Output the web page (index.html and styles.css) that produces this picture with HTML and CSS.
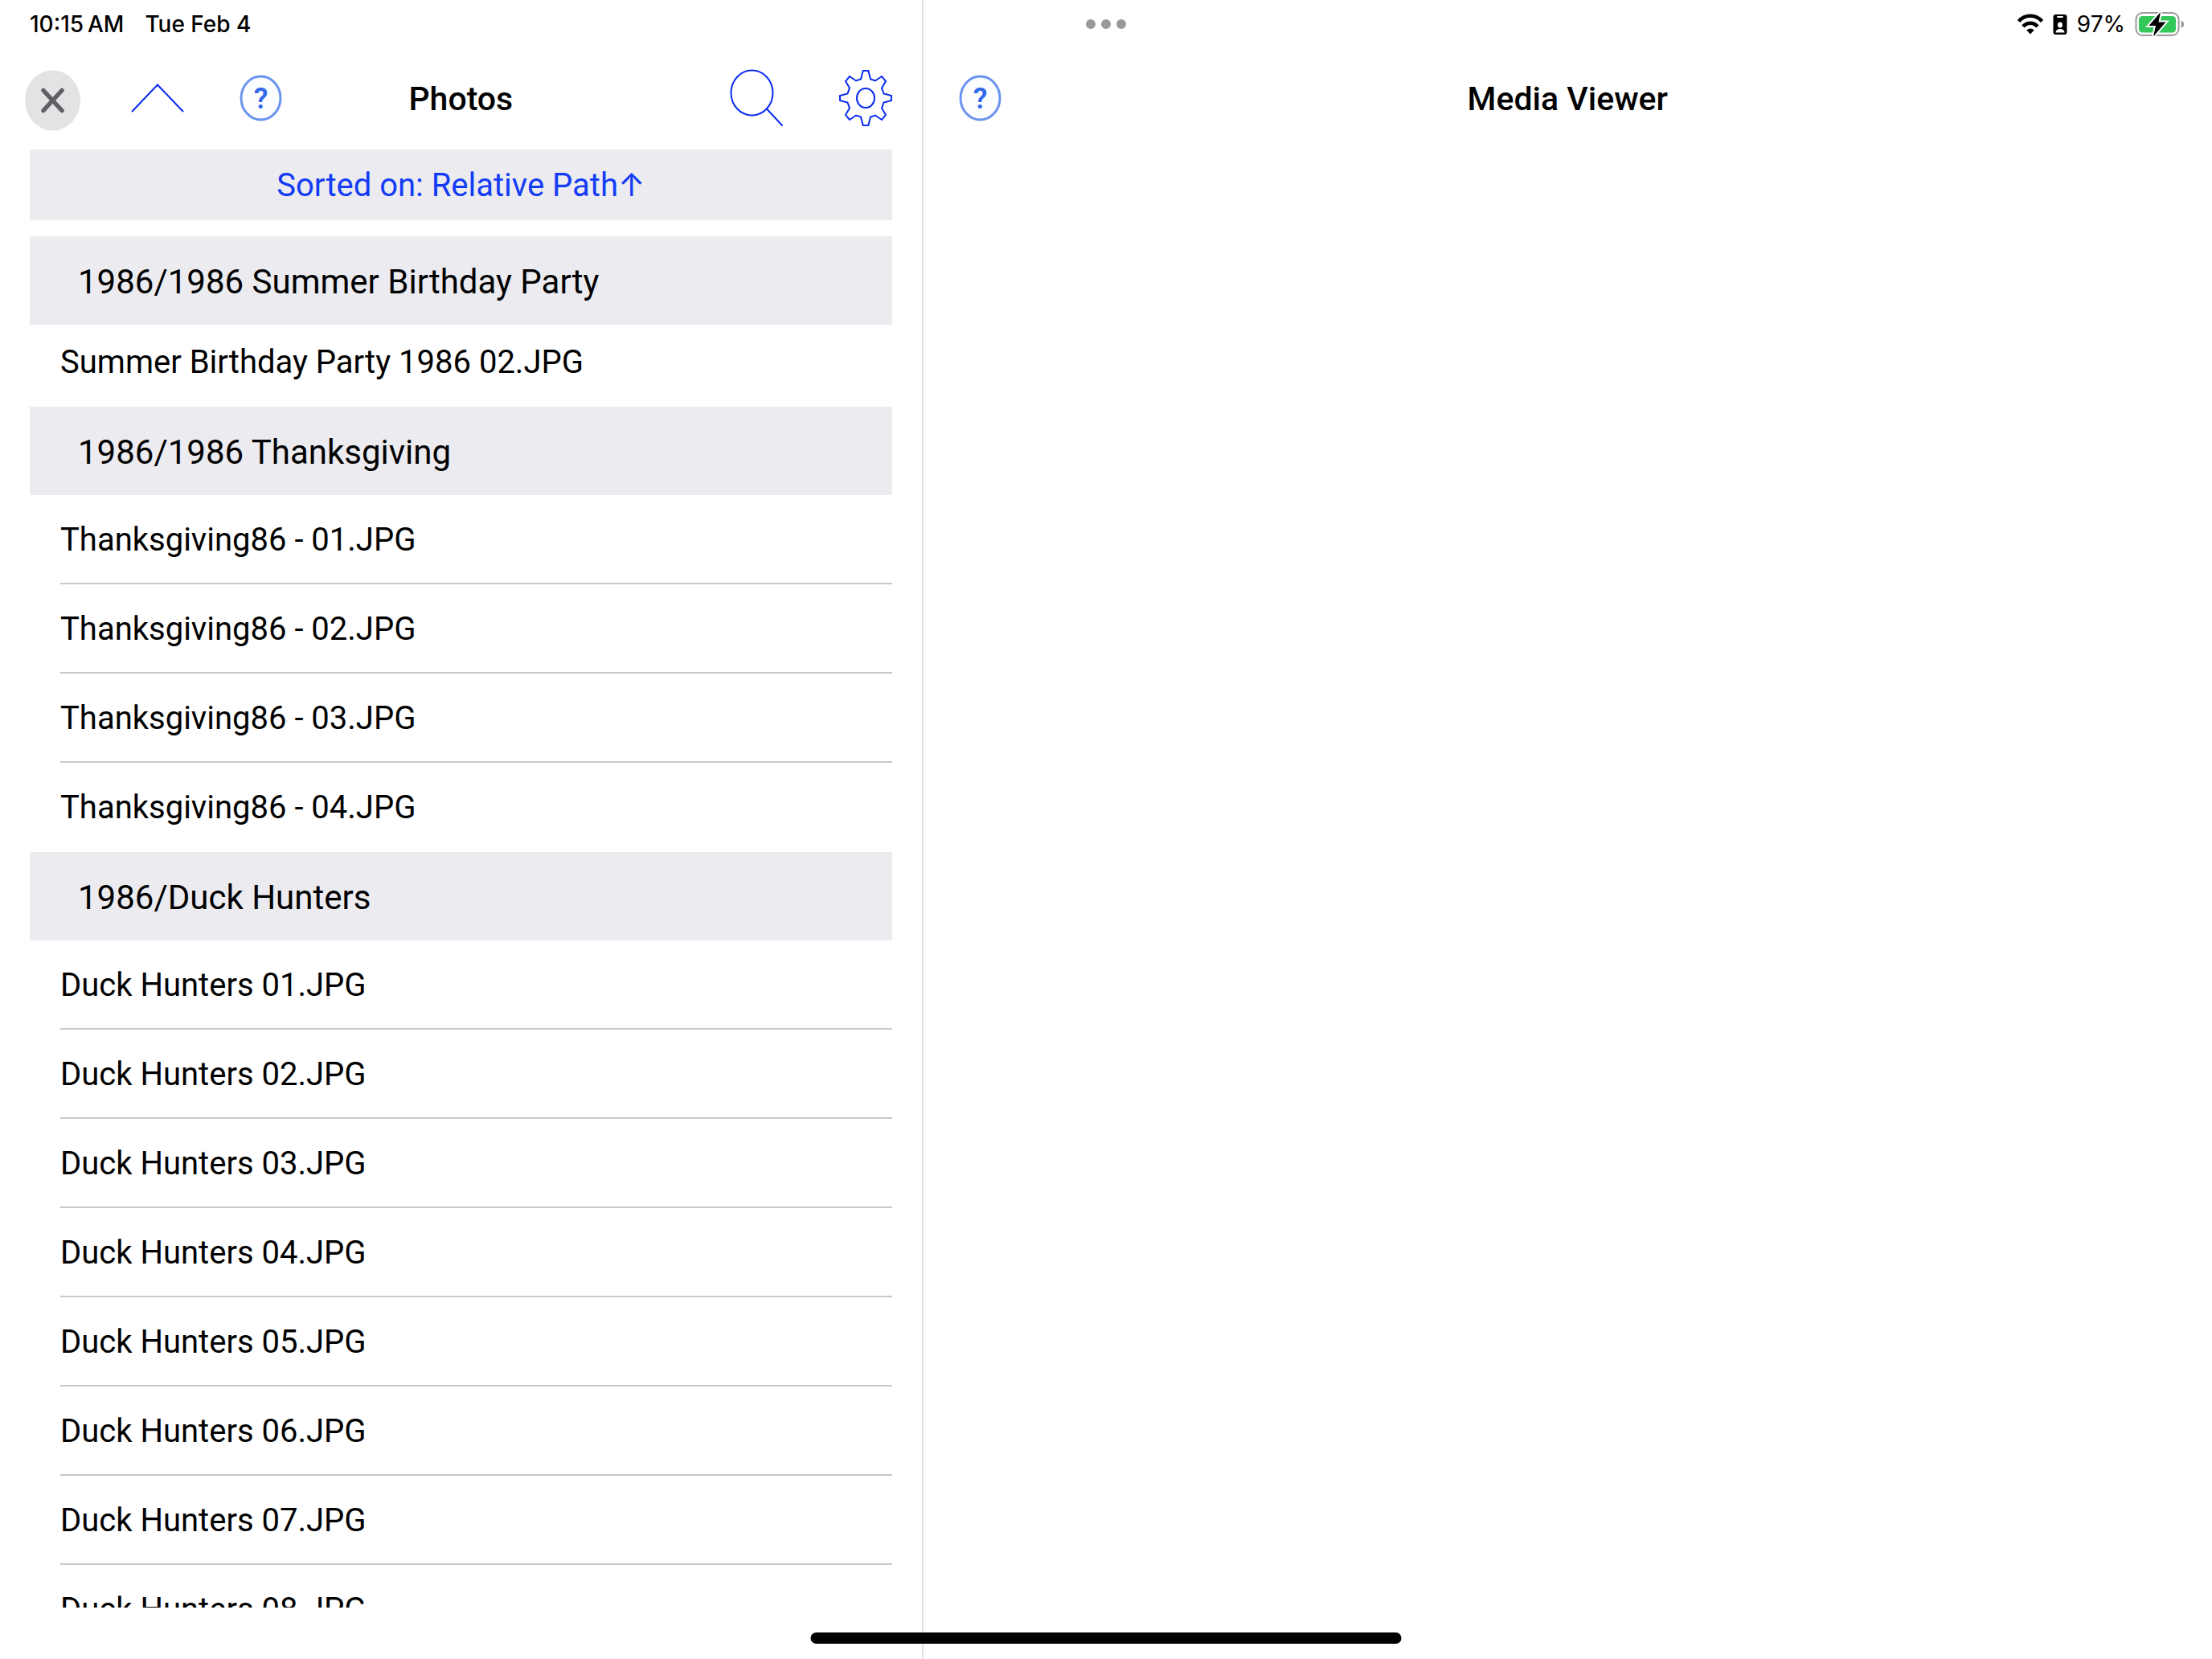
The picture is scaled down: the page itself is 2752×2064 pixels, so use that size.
FILE: index.html
```html
<!DOCTYPE html>
<html lang="en">
<head>
<meta charset="utf-8">
<meta name="viewport" content="width=device-width, initial-scale=1">
<title>Photos</title>
<link rel="stylesheet" href="styles.css">
</head>
<body>
<div class="app">
  <section class="pane pane-list">
    <div class="status status-left">
      <span>10:15&thinsp;AM</span>
      <span>Tue Feb 4</span>
    </div>
    <header class="navbar">
      <div class="nav-start">
        <button class="icon-button" type="button" aria-label="Close">
          <svg width="69" height="80" viewBox="0 0 69 80"><ellipse cx="34.5" cy="42" rx="34.5" ry="37.5" fill="#e3e3e5"/><path d="M23 29.500 46 54.500M46 29.500 23 54.500" fill="none" stroke="#5f5f64" stroke-width="5.500" stroke-linecap="round"/></svg>
        </button>
        <button class="icon-button" type="button" aria-label="Up">
          <svg width="70" height="80" viewBox="0 0 70 80"><path d="M2 56 34 22.500 66 56" fill="none" stroke="#0a2cf0" stroke-width="2"/></svg>
        </button>
        <button class="icon-button" type="button" aria-label="Help">
          <svg width="62" height="80" viewBox="0 0 62 80"><ellipse cx="30.500" cy="39" rx="24.500" ry="27" fill="#fcfdff" stroke="#6a94f0" stroke-width="3"/><text class="help-mark" x="30.500" y="52" text-anchor="middle">?</text></svg>
        </button>
      </div>
      <h1 class="title">Photos</h1>
      <div class="nav-end">
        <button class="icon-button" type="button" aria-label="Search">
          <svg width="66" height="80" viewBox="0 0 66 80"><ellipse cx="27.500" cy="32.500" rx="26" ry="28" fill="none" stroke="#0a2cf0" stroke-width="2"/><path d="M46 52.500 65.500 73.500" stroke="#0a2cf0" stroke-width="2"/></svg>
        </button>
        <button class="icon-button" type="button" aria-label="Settings">
          <svg width="66" height="80" viewBox="-33 -39 66 80"><path d="M-3.300-34H3.300L6-23.500 12-21.500 20-27 25-21 20-12.500 22.500-5.500 32-3V3L22.500 5.500 20 12.500 25 21 20 27 12 21.500 6 23.500 3.300 34H-3.300L-6 23.500-12 21.500-20 27-25 21-20 12.500-22.500 5.500-32 3V-3L-22.500-5.500-20-12.500-25-21-20-27-12-21.500-6-23.500Z" fill="none" stroke="#0a2cf0" stroke-width="2"/><ellipse rx="11" ry="12" fill="none" stroke="#0a2cf0" stroke-width="2"/></svg>
        </button>
      </div>
    </header>
    <div class="content">
      <button class="sort" type="button">Sorted on: Relative Path↑</button>
      <h2 class="group">1986/1986 Summer Birthday Party</h2>
      <ul class="files files-first">
        <li>Summer Birthday Party 1986 02.JPG</li>
      </ul>
      <h2 class="group">1986/1986 Thanksgiving</h2>
      <ul class="files">
        <li>Thanksgiving86 - 01.JPG</li>
        <li>Thanksgiving86 - 02.JPG</li>
        <li>Thanksgiving86 - 03.JPG</li>
        <li>Thanksgiving86 - 04.JPG</li>
      </ul>
      <h2 class="group">1986/Duck Hunters</h2>
      <ul class="files">
        <li>Duck Hunters 01.JPG</li>
        <li>Duck Hunters 02.JPG</li>
        <li>Duck Hunters 03.JPG</li>
        <li>Duck Hunters 04.JPG</li>
        <li>Duck Hunters 05.JPG</li>
        <li>Duck Hunters 06.JPG</li>
        <li>Duck Hunters 07.JPG</li>
        <li>Duck Hunters 08.JPG</li>
      </ul>
    </div>
  </section>

  <section class="pane pane-viewer">
    <div class="status status-right">
      <svg width="32" height="40" viewBox="0 0 32 40" aria-hidden="true"><g fill="none" stroke="#000" stroke-width="4.500"><path d="M1.500 16.500C9.500 7.500 22.500 7.500 30.500 16.500"/><path d="M7 23C12 17.300 20 17.300 25 23"/></g><path d="M11.300 27.500C14 24.800 18 24.800 20.700 27.500L16 32.500Z"/></svg>
      <svg width="18" height="40" viewBox="0 0 18 40" aria-hidden="true"><rect x="0.500" y="8" width="17" height="25" rx="3"/><rect x="5" y="10" width="8" height="2" rx="1" fill="#fff"/><ellipse cx="9" cy="21" rx="3" ry="3.600" fill="#fff"/><path d="M3.500 30.500C3.500 24.500 14.500 24.500 14.500 30.500Z" fill="#fff"/></svg>
      <span class="percent">97%</span>
      <svg width="63" height="40" viewBox="0 0 63 40" aria-hidden="true"><rect x="1.500" y="6" width="53" height="28" rx="8" fill="none" stroke="#9b9b9b" stroke-width="2"/><rect x="5" y="10" width="46" height="20.500" rx="4.500" fill="#34c759"/><path d="M57.500 15.500C62.500 17.500 62.500 23 57.500 25Z" fill="#9b9b9b"/><path d="M32 5 17.500 22H26L23 35.500 38.500 17.500H29.500Z" stroke="#fff" stroke-width="4"/><path d="M32 5 17.500 22H26L23 35.500 38.500 17.500H29.500Z"/></svg>
    </div>
    <header class="navbar navbar-viewer">
      <div class="nav-start">
        <button class="icon-button" type="button" aria-label="Help">
          <svg width="62" height="80" viewBox="0 0 62 80"><ellipse cx="30.500" cy="39" rx="24.500" ry="27" fill="#fcfdff" stroke="#6a94f0" stroke-width="3"/><text class="help-mark" x="30.500" y="52" text-anchor="middle">?</text></svg>
        </button>
      </div>
      <h1 class="title">Media Viewer</h1>
      <div class="nav-end"></div>
    </header>
  </section>

  <button class="multitask" type="button" aria-label="Multitasking"><i></i><i></i><i></i></button>
  <div class="home-indicator"></div>
</div>
</body>
</html>
```
FILE: styles.css
```css
* { box-sizing: border-box; }

body {
  margin: 0;
  background: #fff;
  color: #000;
  font-family: Roboto, Inter, sans-serif;
  font-size: 40px;
}

h1, h2, ul { margin: 0; padding: 0; }

svg { display: block; }

button {
  border: 0;
  padding: 0;
  background: none;
  font: inherit;
}

.app {
  position: relative;
  display: grid;
  grid-template-columns: 5fr 7fr;
  height: 100vh;
  overflow: hidden;
}

.pane {
  display: flex;
  flex-direction: column;
  min-width: 0;
  min-height: 0;
}

.pane-list { padding-bottom: 64px; }

.pane-viewer { border-left: 2px solid #e2e2e4; }

.status {
  display: flex;
  flex: none;
  align-items: center;
  height: 60px;
  font-family: Inter, sans-serif;
  font-size: 28px;
}

.status-left {
  gap: 26px;
  padding-left: 37px;
  font-weight: 500;
}

.status-right {
  justify-content: flex-end;
  gap: 12px;
  padding-right: 33px;
}

.navbar {
  display: grid;
  flex: none;
  grid-template-columns: 1fr auto 1fr;
  align-items: center;
  height: 126px;
  padding: 0 31px;
}

.navbar-viewer { padding: 0 40px; }

.nav-start, .nav-end {
  display: flex;
  align-items: center;
}

.nav-start { gap: 62px; }

.nav-end {
  justify-content: flex-end;
  gap: 70px;
  padding-right: 6px;
}

.title {
  font-size: 41px;
  font-weight: 500;
  line-height: 48px;
}

.help-mark {
  fill: #3468e8;
  font-size: 36px;
  font-weight: 600;
}

.content {
  flex: 1;
  min-height: 0;
  padding: 0 37px;
  overflow: hidden;
}

.sort {
  display: block;
  width: 100%;
  height: 88px;
  margin-bottom: 20px;
  padding-bottom: 2px;
  background: #ebebf0;
  color: #143cf5;
}

.group {
  height: 110px;
  padding-left: 60px;
  background: #ebebf0;
  font-size: 42px;
  font-weight: 400;
  line-height: 114px;
}

.files {
  padding-left: 38px;
  list-style: none;
}

.files li {
  height: 111px;
  border-bottom: 2px solid #c8c8ca;
  line-height: 112px;
}

.files li:last-child { border-bottom: 0; }

.files-first li {
  height: 102px;
  line-height: 94px;
}

.multitask {
  position: absolute;
  top: 24px;
  left: 50%;
  display: flex;
  gap: 7px;
  transform: translateX(-50%);
}

.multitask i {
  width: 12px;
  height: 12px;
  border-radius: 50%;
  background: #999;
}

.home-indicator {
  position: absolute;
  bottom: 19px;
  left: 50%;
  width: 735px;
  height: 14px;
  border-radius: 7px;
  background: #000;
  transform: translateX(-50%);
}
```
